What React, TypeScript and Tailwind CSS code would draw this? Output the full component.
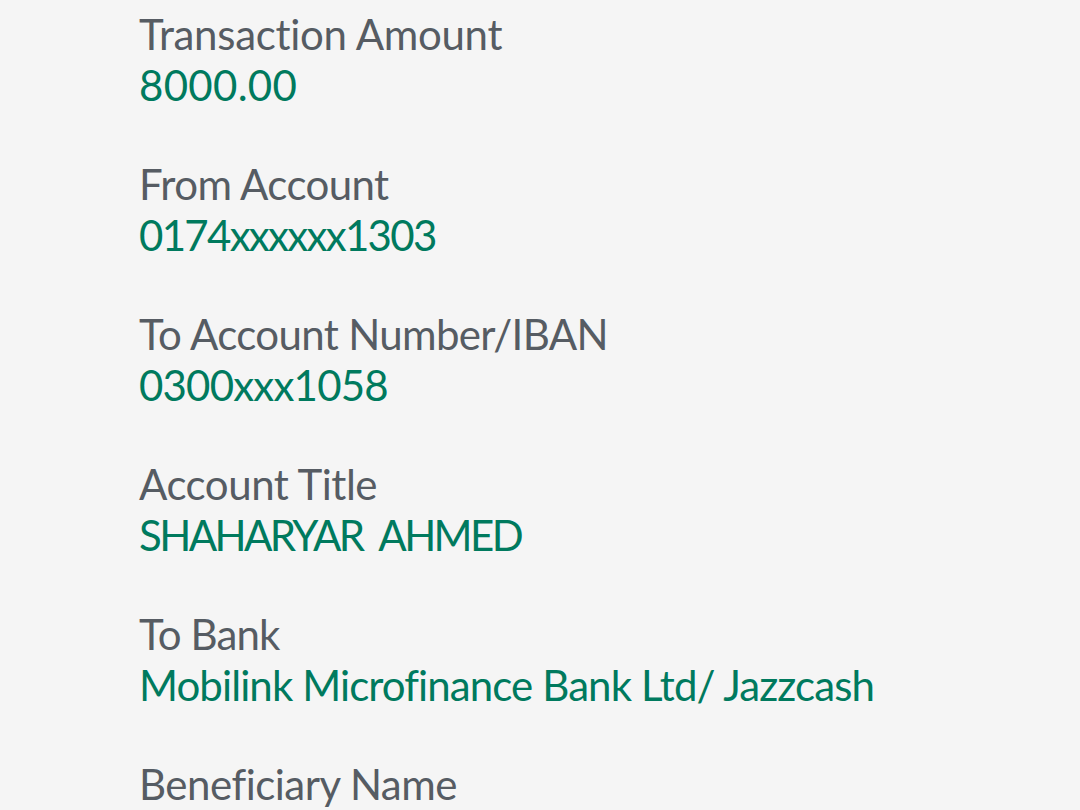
type Row = { label: string; value: string; lt: string; vt: string };

const rows: Row[] = [
  { label: "Transaction Amount", value: "8000.00", lt: "tracking-[-0.3px]", vt: "tracking-[0.3px]" },
  { label: "From Account", value: "0174xxxxxx1303", lt: "tracking-[-0.6px]", vt: "tracking-[-1.7px]" },
  { label: "To Account Number/IBAN", value: "0300xxx1058", lt: "tracking-[-0.64px]", vt: "tracking-[-0.8px]" },
  { label: "Account Title", value: "SHAHARYAR AHMED", lt: "tracking-[-0.46px]", vt: "tracking-[-2.6px] [word-spacing:9px]" },
  { label: "To Bank", value: "Mobilink Microfinance Bank Ltd/ Jazzcash", lt: "tracking-[-0.9px]", vt: "tracking-[-0.9px]" },
  { label: "Beneficiary Name", value: "", lt: "tracking-[-0.5px]", vt: "" },
];

export default function App() {
  return (
    <div
      className="w-[1080px] h-[810px] overflow-hidden bg-[#f5f5f5] pl-[139px] pt-[9px] [font-variant-ligatures:none]"
      style={{ fontFamily: "Lato, 'Noto Sans', sans-serif" }}
    >
      <div className="flex flex-col gap-[48px]">
        {rows.map((r) => (
          <div key={r.label} className="flex flex-col">
            <div className={`text-[42px] leading-[51px] text-[#565c63] ${r.lt}`}>{r.label}</div>
            {r.value && (
              <div className={`text-[42px] leading-[51px] text-[#007a5e] ${r.vt}`}>{r.value}</div>
            )}
          </div>
        ))}
      </div>
    </div>
  );
}
